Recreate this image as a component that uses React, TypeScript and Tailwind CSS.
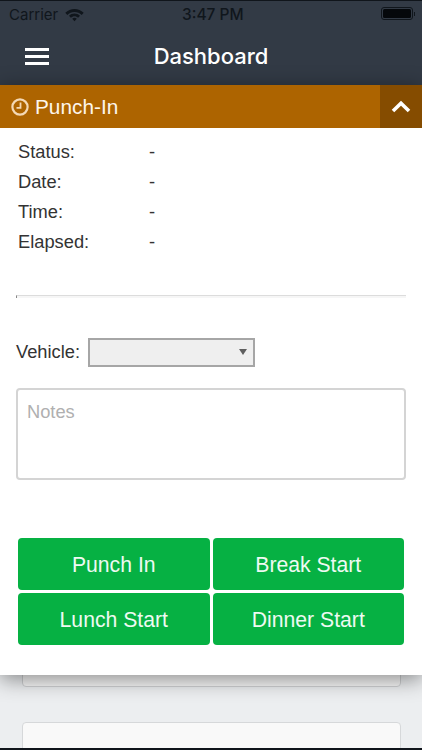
import React from "react";

function Row({ label }: { label: string }) {
  return (
    <div className="flex h-[30.2px] items-center text-[18.3px] text-[#333]">
      <span className="w-[131px]">{label}</span>
      <span>-</span>
    </div>
  );
}

function Btn({ label }: { label: string }) {
  return (
    <button className="h-[52.5px] rounded-[4px] bg-[#06b143] pt-[1px] text-center text-[21.2px] text-[#eefaf2]">
      {label}
    </button>
  );
}

export default function App() {
  return (
    <div className="relative h-[750px] w-[422px] overflow-hidden bg-[#eceef0] font-['Liberation_Sans',Arial,sans-serif]">
      <div className="flex h-[85px] flex-col border-t border-t-[#10151b] bg-[#323a45]">
        <div className="relative flex h-[28px] items-center pl-[9px] font-['Inter',sans-serif] text-[15px] text-[#10161c]">
          <span>Carrier</span>
          <svg className="ml-[7px]" width="19" height="14" viewBox="0 0 19 14" fill="#10161c">
            <path d="M9.5 1C6 1 2.800 2.400 .3 4.800L2.300 6.900C4.200 5 6.700 3.900 9.500 3.900S14.800 5 16.700 6.900L18.700 4.800C16.200 2.400 13 1 9.500 1Z" />
            <path d="M9.500 5.500C7.500 5.500 5.500 6.300 4 7.800L5.900 9.700C6.900 8.800 8.100 8.200 9.500 8.200S12.100 8.800 13.100 9.700L15 7.800C13.500 6.300 11.500 5.500 9.500 5.500Z" />
            <path d="M9.500 9.800C8.700 9.800 8 10.100 7.200 10.700L9.500 13.200L11.800 10.700C11 10.100 10.300 9.800 9.500 9.800Z" />
          </svg>
          <span className="absolute left-[182px] text-[15.5px] font-medium">3:47 PM</span>
          <div className="absolute left-[381px] top-[6px] flex items-center">
            <div className="h-[13px] w-[32px] rounded-[3px] border border-[#10161c] p-[1px]">
              <div className="h-full w-full rounded-[1.500px] bg-[#05080b]" />
            </div>
            <div className="ml-[1px] h-[4px] w-[1px] bg-[#10161c]" />
          </div>
        </div>
        <div className="relative flex flex-1 items-center justify-center pb-[1px]">
          <div className="absolute left-[25px] top-[19px] flex flex-col gap-[4px]">
            <div className="h-[3px] w-[24px] bg-white" />
            <div className="h-[3px] w-[24px] bg-white" />
            <div className="h-[3px] w-[24px] bg-white" />
          </div>
          <span className="font-['Inter',sans-serif] text-[22px] font-medium text-white">Dashboard</span>
        </div>
      </div>

      <div className="absolute left-[22px] top-[600px] h-[87px] w-[379px] rounded-[4px] border border-[#cfd1d3] bg-[#f7f7f7]" />
      <div className="absolute left-[22px] top-[722px] h-[60px] w-[379px] rounded-[4px] border border-[#d6d8da] bg-[#f9f9f9]" />

      <div className="relative h-[590px] bg-white shadow-[0_4px_20px_rgba(0,0,0,0.45)]">
        <div className="flex h-[43px] items-center bg-[#ad6400]">
          <svg className="ml-[11px]" width="18" height="18" viewBox="0 0 18 18" fill="none" stroke="#f4d9b5" strokeWidth="2.200">
            <circle cx="9" cy="9" r="7.600" />
            <path d="M9.500 4.500V9.800H5.500" strokeWidth="1.800" />
          </svg>
          <span className="ml-[6px] flex-1 text-[20.8px] text-[#fdf6ec]">Punch-In</span>
          <div className="flex h-full w-[42px] items-center justify-center bg-[#854c00]">
            <svg width="20" height="13" viewBox="0 0 20 13" fill="none" stroke="white" strokeWidth="3.600">
              <path d="M2 11L10 3.200L18 11" />
            </svg>
          </div>
        </div>

        <div className="pl-[18px] pt-[8.5px]">
          <Row label="Status:" />
          <Row label="Date:" />
          <Row label="Time:" />
          <Row label="Elapsed:" />
        </div>

        <div className="mx-[16px] mt-[37.7px] h-[3px] border-l border-t border-l-[#888] border-t-[#dcdcdc] bg-[#f6f6f6]" />

        <div className="mt-[40px] flex items-center px-[16px] text-[18.3px] text-[#333]">
          <span className="-translate-y-[1px]">Vehicle:</span>
          <div className="relative ml-[8px] h-[29px] w-[167px] border-2 border-[#a6a6a6] bg-[#efefef]">
            <span className="absolute right-[6.500px] top-[9px] h-0 w-0 border-x-[4px] border-t-[6.500px] border-x-transparent border-t-[#5f5f5f]" />
          </div>
        </div>

        <div className="mx-[16px] mt-[21px] h-[92px] rounded-[4px] border-2 border-[#d4d4d4] px-[9px] pt-[12px] text-[18.3px] leading-[20px] text-[#b0b0b0]">
          Notes
        </div>

        <div className="mx-[18px] mt-[58px] grid grid-cols-2 gap-x-[3px] gap-y-[2.5px]">
          <Btn label="Punch In" />
          <Btn label="Break Start" />
          <Btn label="Lunch Start" />
          <Btn label="Dinner Start" />
        </div>
      </div>

      <div className="absolute bottom-0 left-0 h-[2px] w-full bg-[#10151b]" />
    </div>
  );
}
